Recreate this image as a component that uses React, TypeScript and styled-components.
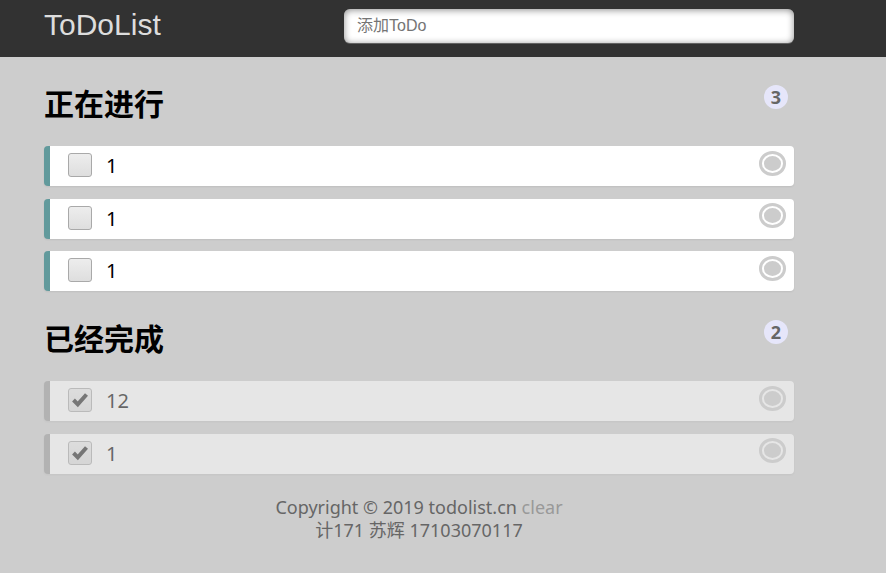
import styled, { createGlobalStyle } from 'styled-components';

const GlobalStyle = createGlobalStyle`
  body {
    margin: 0;
    padding: 0;
    background: #cdcdcd;
    font-family: "Noto Sans", "Noto Sans CJK SC", sans-serif;
    font-size: 20px;
  }
`;

const Header = styled.header`
  height: 57px;
  background: #323232;
`;

const HeaderInner = styled.div`
  width: 750px;
  margin-left: 44px;
  display: flex;
  justify-content: space-between;
  align-items: flex-start;
`;

const Logo = styled.label`
  color: #ddd;
  font-family: "Liberation Sans", Arial, sans-serif;
  font-size: 30px;
  line-height: 50px;
  cursor: pointer;
`;

const AddInput = styled.input`
  width: 450px;
  height: 34px;
  margin-top: 9px;
  box-sizing: border-box;
  border: none;
  border-radius: 6px;
  padding: 0 0 0 13px;
  font-family: "Liberation Sans", "Noto Sans CJK SC", sans-serif;
  font-size: 16px;
  box-shadow: 0 1px 0 rgba(255, 255, 255, 0.24), 0 1px 7px rgba(0, 0, 0, 0.45) inset;
  &::placeholder {
    color: #757575;
  }
  &:focus {
    outline: none;
  }
`;

const Main = styled.main`
  width: 750px;
  margin-left: 44px;
`;

const Title = styled.h2<{ $gap?: number }>`
  position: relative;
  margin: ${({ $gap }) => $gap ?? 25}px 0 24px;
  font-family: "Noto Sans CJK SC", sans-serif;
  font-size: 30px;
  font-weight: 700;
  line-height: 40px;
  color: #000;
`;

const Count = styled.span`
  position: absolute;
  top: 3px;
  right: 6px;
  min-width: 24px;
  height: 24px;
  box-sizing: border-box;
  padding: 0 6px;
  border-radius: 12px;
  background: #e6e6fa;
  color: #666;
  font-family: "Open Sans", sans-serif;
  font-size: 18px;
  font-weight: 700;
  line-height: 24px;
  text-align: center;
`;

const List = styled.ul`
  list-style: none;
  margin: 0;
  padding: 0;
  display: flex;
  flex-direction: column;
  gap: 12.5px;
`;

const Item = styled.li<{ $done?: boolean }>`
  height: 40px;
  display: flex;
  align-items: flex-start;
  background: #fff;
  border-radius: 4px;
  border-left: 6px solid ${({ $done }) => ($done ? '#999' : '#629a9c')};
  box-shadow: 0 1px 2px rgba(0, 0, 0, 0.07);
  opacity: ${({ $done }) => ($done ? 0.5 : 1)};
`;

const Check = styled.span`
  flex: none;
  width: 24px;
  height: 24px;
  margin: 7px 0 0 18px;
  box-sizing: border-box;
  border: 1px solid #a9a9a9;
  border-radius: 3px;
  background: linear-gradient(#ededed, #dedede);
  display: flex;
  align-items: center;
  justify-content: center;
  svg {
    width: 18px;
    height: 18px;
  }
`;

const Label = styled.p`
  flex: 1;
  margin: 0 0 0 14px;
  font-size: 20px;
  line-height: 40px;
  color: #000;
`;

const Remove = styled.a`
  flex: none;
  width: 17.5px;
  height: 15px;
  margin: 2.5px 6px 0 0;
  border: 7.5px double #fff;
  border-radius: 50%;
  background: #ccc;
  cursor: pointer;
`;

const Footer = styled.footer`
  margin-top: 22px;
  width: 750px;
  margin-left: 44px;
  text-align: center;
  color: #666;
  font-size: 18px;
  line-height: 23px;
  a {
    color: #999;
    text-decoration: none;
  }
`;

const CheckMark = () => (
  <svg viewBox="0 0 18 18">
    <path d="M2.5 9 L6.8 13.3 L15.5 3.5" fill="none" stroke="#222" strokeWidth="4" strokeLinejoin="miter" />
  </svg>
);

const TodoRow = ({ text, done }: { text: string; done?: boolean }) => (
  <Item $done={done}>
    <Check>{done && <CheckMark />}</Check>
    <Label>{text}</Label>
    <Remove />
  </Item>
);

const doing = ['1', '1', '1'];
const finished = ['12', '1'];

export default function App() {
  return (
    <>
      <GlobalStyle />
      <Header>
        <HeaderInner>
          <Logo>ToDoList</Logo>
          <AddInput placeholder="添加ToDo" />
        </HeaderInner>
      </Header>
      <Main>
        <Title>
          正在进行<Count>{doing.length}</Count>
        </Title>
        <List>
          {doing.map((t, i) => (
            <TodoRow key={i} text={t} />
          ))}
        </List>
        <Title $gap={26}>
          已经完成<Count>{finished.length}</Count>
        </Title>
        <List>
          {finished.map((t, i) => (
            <TodoRow key={i} text={t} done />
          ))}
        </List>
      </Main>
      <Footer>
        Copyright &copy; 2019 todolist.cn <a href="#">clear</a>
        <br />
        计171 苏辉 17103070117
      </Footer>
    </>
  );
}
